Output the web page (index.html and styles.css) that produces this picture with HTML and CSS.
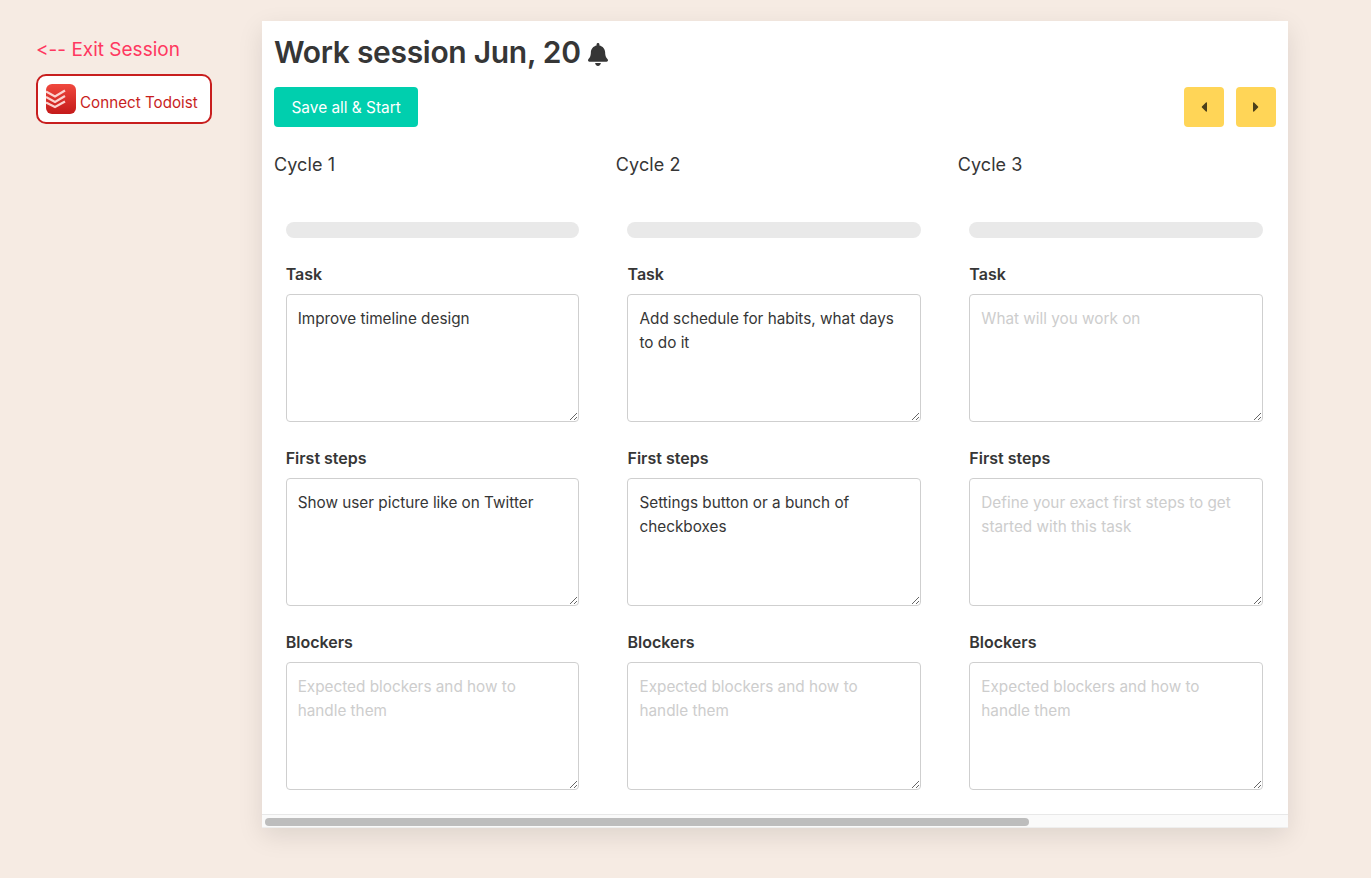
FILE: index.html
```html
<!DOCTYPE html>
<html lang="en">
<head>
<meta charset="utf-8">
<title>Work session</title>
<link rel="stylesheet" href="styles.css">
</head>
<body>
<div class="page">
  <aside class="side">
    <a class="exit" href="#">&lt;-- Exit Session</a>
    <a class="todoist" href="#">
      <svg class="todoist-icon" viewBox="0 0 30 30" aria-hidden="true">
        <defs><linearGradient id="tg" x1="0" y1="0" x2="0" y2="1"><stop offset="0" stop-color="#f0483e"/><stop offset="1" stop-color="#c41a1a"/></linearGradient></defs>
        <rect width="30" height="30" rx="6" fill="url(#tg)"/>
        <path d="M0 11.5 9 16.5 19 10.5M0 17 9 22 19 16M0 22.5 9 27 19 21.500" transform="translate(0 -4)" fill="none" stroke="#fbd3d0" stroke-width="2.200"/>
      </svg>
      <span class="todoist-text">Connect Todoist</span>
    </a>
  </aside>
  <main class="card">
    <header class="head">
      <h1 class="title">Work session Jun, 20
        <svg class="bell" viewBox="0 0 448 512" aria-hidden="true"><path d="M224 512c35.32 0 63.97-28.65 63.97-64H160.03c0 35.35 28.65 64 63.97 64zm215.39-149.71c-19.32-20.76-55.47-51.99-55.47-154.29 0-77.7-54.48-139.9-127.94-155.16V32c0-17.67-14.32-32-31.98-32s-31.98 14.33-31.98 32v20.84C118.56 68.1 64.08 130.3 64.08 208c0 102.3-36.15 133.53-55.47 154.29-6 6.45-8.66 14.16-8.61 21.71.11 16.4 12.98 32 32.1 32h383.8c19.12 0 32-15.6 32.1-32 .05-7.55-2.61-15.27-8.61-21.71z"/></svg>
      </h1>
      <div class="toolbar">
        <button class="btn btn-primary">Save all &amp; Start</button>
        <div class="nav">
          <button class="btn btn-warn" aria-label="Previous"><svg class="caret" viewBox="0 0 192 512"><path d="M192 127.338v257.324c0 17.818-21.543 26.741-34.142 14.142L29.196 270.142c-7.81-7.81-7.81-20.474 0-28.284l128.662-128.662c12.599-12.6 34.142-3.676 34.142 14.142z"/></svg></button>
          <button class="btn btn-warn" aria-label="Next"><svg class="caret" viewBox="0 0 192 512"><path d="M0 384.662V127.338c0-17.818 21.543-26.741 34.142-14.142l128.662 128.662c7.81 7.81 7.81 20.474 0 28.284L34.142 398.804C21.543 411.404 0 402.48 0 384.662z"/></svg></button>
        </div>
      </div>
    </header>
    <div class="cycles">
      <section class="cycle">
        <h2 class="cycle-title">Cycle 1</h2>
        <div class="cycle-body">
          <div class="progress"></div>
          <label class="label">Task</label>
          <textarea class="area" placeholder="What will you work on">Improve timeline design</textarea>
          <label class="label">First steps</label>
          <textarea class="area" placeholder="Define your exact first steps to get started with this task">Show user picture like on Twitter</textarea>
          <label class="label">Blockers</label>
          <textarea class="area" placeholder="Expected blockers and how to handle them"></textarea>
        </div>
      </section>
      <section class="cycle">
        <h2 class="cycle-title">Cycle 2</h2>
        <div class="cycle-body">
          <div class="progress"></div>
          <label class="label">Task</label>
          <textarea class="area" placeholder="What will you work on">Add schedule for habits, what days to do it</textarea>
          <label class="label">First steps</label>
          <textarea class="area" placeholder="Define your exact first steps to get started with this task">Settings button or a bunch of checkboxes</textarea>
          <label class="label">Blockers</label>
          <textarea class="area" placeholder="Expected blockers and how to handle them"></textarea>
        </div>
      </section>
      <section class="cycle">
        <h2 class="cycle-title">Cycle 3</h2>
        <div class="cycle-body">
          <div class="progress"></div>
          <label class="label">Task</label>
          <textarea class="area" placeholder="What will you work on"></textarea>
          <label class="label">First steps</label>
          <textarea class="area" placeholder="Define your exact first steps to get started with this task"></textarea>
          <label class="label">Blockers</label>
          <textarea class="area" placeholder="Expected blockers and how to handle them"></textarea>
        </div>
      </section>
    </div>
    <div class="scrollbar"><div class="thumb"></div></div>
  </main>
</div>
</body>
</html>
```
FILE: styles.css
```css
* { box-sizing: border-box; }
html, body { margin: 0; height: 100%; overflow: hidden; }
body {
  background: #f6ebe3;
  color: #363636;
  font-family: Inter, "Liberation Sans", sans-serif;
  font-size: 16px;
  line-height: 24px;
  font-variant-ligatures: none;
  font-feature-settings: "calt" 0;
}
.page { display: flex; align-items: flex-start; padding: 21px 0 0 36px; }
.side { width: 226px; flex: none; padding-top: 15px; display: flex; flex-direction: column; align-items: flex-start; }
.exit { color: #ff3860; font-size: 19px; line-height: 27px; text-decoration: none; margin-bottom: 11px; }
.todoist {
  display: flex; align-items: center; gap: 4px;
  width: 176px; height: 50px; padding: 0 8px;
  background: #fff; border: 2px solid #c81e1e; border-radius: 10px;
  color: #c81e1e; text-decoration: none; white-space: nowrap; font-size: 15.200px;
}
.todoist-text { padding-top: 7px; }
.todoist-icon { width: 30px; height: 30px; flex: none; }
.card {
  width: 1026px; flex: none; background: #fff;
  box-shadow: 0 8px 24px rgba(10, 10, 10, .1);
}
.head { padding: 12px 12px 0; }
.title { margin: 0; font-size: 30px; line-height: 38px; font-weight: 600; color: #363636; letter-spacing: -.3px; }
.bell { width: 20px; height: 23px; fill: #363636; vertical-align: -3px; }
.toolbar { display: flex; justify-content: space-between; margin-top: 16px; }
.nav { display: flex; gap: 12px; }
.btn { height: 40px; border: 0; border-radius: 4px; font: inherit; padding: 0 17.500px; }
.btn-primary { background: #00cfae; color: #fff; font-size: 15.400px; padding-top: 1px; }
.btn-warn { width: 40px; padding: 0; background: #ffd557; display: flex; align-items: center; justify-content: center; }
.caret { width: 6px; height: 16px; fill: rgba(0, 0, 0, .7); }
.cycles { display: flex; overflow: hidden; padding-left: 12px; margin-top: 24px; }
.cycle { width: 341.830px; flex: none; }
.cycle-title { margin: 0; font-size: 18px; line-height: 27px; font-weight: 400; color: #363636; letter-spacing: .1px; }
.cycle-body { padding: 44px 36.830px 24px 11.670px; }
.progress { height: 16px; border-radius: 8px; background: #e9e9e9; margin-bottom: 24px; }
.label { display: block; font-weight: 600; margin-bottom: 8px; }
.area {
  display: block; width: 100%; height: 128px; margin-bottom: 24px;
  padding: 12px 14px 11px 11px; border: 1px solid #cfcfcf; border-radius: 4px;
  font: inherit; font-size: 15.300px; color: #363636; background: #fff; resize: vertical; outline: none;
}
.area:last-child { margin-bottom: 0; }
.area::placeholder { color: #cdcdcd; opacity: 1; }
.scrollbar { height: 14px; padding: 3px 0 2px 3px; background: #fafafa; border-top: 1px solid #e8e8e8; border-bottom: 1px solid #eee; }
.thumb { width: 764px; height: 8px; border-radius: 4px; background: #bdbdbd; }
```
